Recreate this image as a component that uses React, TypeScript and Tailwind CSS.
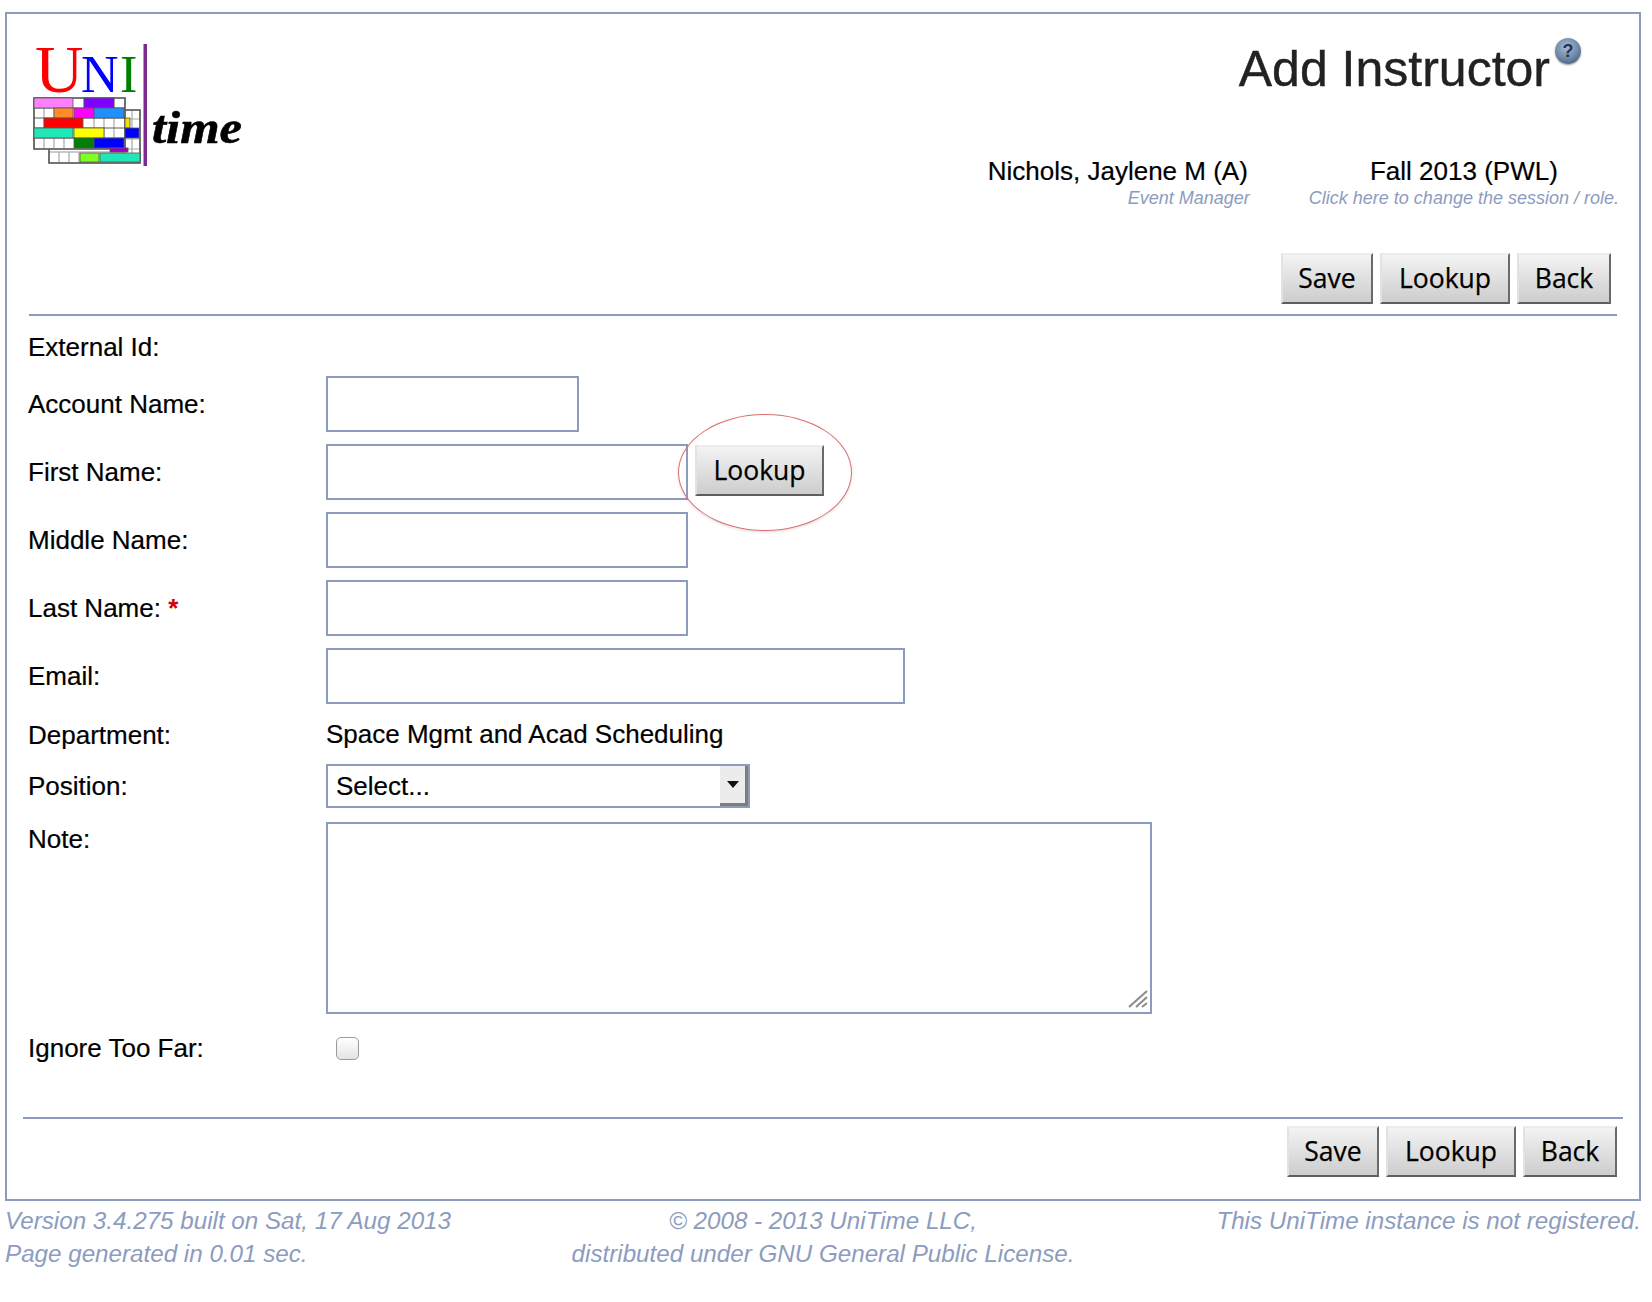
import React from "react";

const sans = "font-['Liberation_Sans',Arial,sans-serif]";

function Logo() {
  const cells: [number, number, number, number, string][] = [
    [34, 98, 39, 10, "#ff80ff"], [84, 98, 30, 10, "#8000ff"],
    [54, 108, 19, 10, "#ff8c28"], [74, 108, 20, 10, "#ff00ff"], [94, 108, 30, 10, "#1e90ff"],
    [44, 118, 39, 10, "#ff0000"], [125, 118, 5, 10, "#f0e000"],
    [34, 128, 39, 10, "#1fe8b8"], [74, 128, 30, 10, "#ffff00"], [125, 128, 14, 10, "#0000ff"],
    [74, 138, 20, 10, "#008000"], [94, 138, 30, 10, "#0000ff"], [110, 148, 18, 4, "#a000c0"],
    [80, 153, 19, 9, "#80ff20"], [100, 153, 40, 9, "#1fe8b8"],
  ];
  return (
    <svg viewBox="28 40 220 130" className="w-[220px] h-[130px] shrink-0 overflow-visible">
      <g stroke="#a8a8a8" strokeWidth="1.2" fill="#fff">
        <rect x="49" y="152" width="91" height="11" />
        <rect x="125" y="110" width="15" height="52" />
        <path d="M59 152v11M69 152v11M79 152v11M132 110v52M125 119h15M125 129h15M125 139h15M125 149h15" />
        <rect x="34" y="98" width="91" height="51" />
        <path d="M44 108v40M54 108v10M84 98v10M114 98v10M54 138v10M64 138v10M94 118v20M104 118v20M114 118v20" />
      </g>
      <g stroke="#5a5a5a" strokeWidth="1.6" fill="none">
        <path d="M34 98h91v51H34zM49 149v14h91v-53h-15" />
        <path d="M34 108h91M34 118h91M34 128h91M34 138h91" strokeWidth="1" />
      </g>
      {cells.map(([x, y, w, h, c], i) => (
        <rect key={i} x={x} y={y} width={w} height={h} fill={c} stroke="#555" strokeWidth="0.8" />
      ))}
      <rect x="143.500" y="44" width="3.500" height="122" fill="#7b2a8f" />
      <text x="35" y="92" fontFamily="Liberation Serif, serif" fontSize="67" fill="#ff0000">U</text>
      <text x="81" y="92" fontFamily="Liberation Serif, serif" fontSize="52" fill="#0000ff">N</text>
      <text x="120" y="92" fontFamily="Liberation Serif, serif" fontSize="52" fill="#008000">I</text>
      <text x="152" y="143" fontFamily="Liberation Serif, serif" fontSize="46" fontStyle="italic" fontWeight="700" fill="#000" stroke="#000" strokeWidth="0.6" textLength="90" lengthAdjust="spacingAndGlyphs">time</text>
    </svg>
  );
}

function Btn({ w, children }: { w: string; children: React.ReactNode }) {
  return (
    <button
      className={`${w} h-[51px] border-2 border-t-[#ececec] border-l-[#e2e2e2] border-r-[#6a6a6a] border-b-[#5e5e5e] bg-gradient-to-b from-[#f3f3f3] to-[#cdcdcd] text-black text-[26.500px] leading-none [-webkit-text-stroke:0.25px_#000] font-['Open_Sans',sans-serif]`}
    >
      {children}
    </button>
  );
}

const inputCls = "h-[56px] border-2 border-[#8c9cbc] bg-white";

function Row({ label, cls, children }: { label: React.ReactNode; cls?: string; children?: React.ReactNode }) {
  return (
    <div className={`flex items-center ${cls ?? ""}`}>
      <div className="w-[298px] shrink-0 pt-[1px]">{label}</div>
      {children}
    </div>
  );
}

export default function App() {
  return (
    <div className={`w-[1652px] h-[1302px] bg-white pt-[12px] pl-[5px] text-black ${sans}`}>
      <div className="w-[1636px] h-[1189px] border-2 border-[#8c9cbc] flex flex-col">
        <header className="flex pl-[21px] pr-[23px]">
          <div className="pt-[26px]">
            <Logo />
          </div>
          <div className="flex-1 flex flex-col items-end pt-[27px]">
            <div className="flex items-start mr-[35px]">
              <h1 className="text-[50px] leading-[56px] text-[#222] [-webkit-text-stroke:0.4px_#222]">Add Instructor</h1>
              <div className="ml-[5px] -mt-[3px] w-[26px] h-[26px] rounded-full bg-[radial-gradient(circle_at_45%_35%,#a9bcd4,#6c86a6_55%,#34465e)] shadow-[0_1px_2px_rgba(0,0,0,0.4)] flex items-center justify-center text-[18px] font-bold text-[#23344e]">
                ?
              </div>
            </div>
            <div className="flex mt-[60px] -mr-[3px] gap-[59px]">
              <div className="text-right">
                <div className="text-[26px] leading-[28px] pr-[2px] [-webkit-text-stroke:0.2px_#000]">Nichols, Jaylene M (A)</div>
                <div className="text-[18px] leading-[25px] pt-[1px] italic text-[#8c9cc0]">Event Manager</div>
              </div>
              <div className="text-center">
                <div className="text-[26px] leading-[28px] [-webkit-text-stroke:0.2px_#000]">Fall 2013 (PWL)</div>
                <div className="text-[18px] leading-[25px] pt-[1px] italic text-[#8c9cc0]">Click here to change the session / role.</div>
              </div>
            </div>
            <div className="flex gap-[7px] mt-[42px] mr-[5px]">
              <Btn w="w-[92px]">Save</Btn>
              <Btn w="w-[130px]">Lookup</Btn>
              <Btn w="w-[94px]">Back</Btn>
            </div>
          </div>
        </header>
        <div className="ml-[22px] mr-[22px] mt-[10px] h-[2px] bg-[#8c9cbc]" />
        <main className="pl-[21px] text-[26px] [-webkit-text-stroke:0.2px_#000] flex flex-col">
          <Row label="External Id:" cls="h-[38px] mt-[12px]" />
          <Row label="Account Name:" cls="mt-[10px]">
            <input className={`${inputCls} w-[253px]`} />
          </Row>
          <Row label="First Name:" cls="mt-[12px] relative">
            <input className={`${inputCls} w-[362px]`} />
            <div className="ml-[7px] -mt-[3px]">
              <Btn w="w-[129px]">Lookup</Btn>
            </div>
            <div className="absolute left-[650px] top-[-30px] w-[174px] h-[117px] rounded-[50%] border-[1.5px] border-[#d9706f] shadow-[0_1px_3px_rgba(0,0,0,0.15)] pointer-events-none" />
          </Row>
          <Row label="Middle Name:" cls="mt-[12px]">
            <input className={`${inputCls} w-[362px]`} />
          </Row>
          <Row
            label={
              <span>
                Last Name: <span className="text-[#d40000] font-bold [-webkit-text-stroke:0]">*</span>
              </span>
            }
            cls="mt-[12px]"
          >
            <input className={`${inputCls} w-[362px]`} />
          </Row>
          <Row label="Email:" cls="mt-[12px]">
            <input className={`${inputCls} w-[579px]`} />
          </Row>
          <Row label="Department:" cls="h-[37px] mt-[12px]">
            <span>Space Mgmt and Acad Scheduling</span>
          </Row>
          <Row label="Position:" cls="mt-[11px]">
            <div className="w-[424px] h-[44px] border-2 border-[#8c9cbc] flex items-center justify-between pl-[8px]">
              <span>Select...</span>
              <div className="w-[28px] h-full bg-[#ececec] border-r-[3px] border-b-[3px] border-[#7d7d7d] flex items-center justify-center">
                <svg width="14" height="8" viewBox="0 0 14 8">
                  <path d="M1 0h12L7 7z" fill="#111" />
                </svg>
              </div>
            </div>
          </Row>
          <div className="flex mt-[14px]">
            <div className="w-[298px] shrink-0 -mt-[2px]">Note:</div>
            <div className="relative">
              <textarea className="block w-[826px] h-[192px] border-2 border-[#8c9cbc] resize-none" />
              <svg className="absolute right-[4px] bottom-[6px]" width="20" height="18" viewBox="0 0 20 18">
                <path d="M1 17L19 1M8 17L19 7M14 17l5-4" stroke="#8a8a8a" strokeWidth="2" fill="none" />
              </svg>
            </div>
          </div>
          <Row label="Ignore Too Far:" cls="h-[42px] mt-[13px]">
            <input
              type="checkbox"
              className="ml-[10px] w-[23px] h-[23px] appearance-none rounded-[5px] border border-[#9a9a9a] bg-gradient-to-b from-white to-[#e4e4e4]"
            />
          </Row>
        </main>
        <div className="ml-[16px] mr-[16px] mt-[48px] h-[2px] bg-[#8c9cbc]" />
        <div className="flex justify-end gap-[7px] mt-[7px] mr-[22px]">
          <Btn w="w-[92px]">Save</Btn>
          <Btn w="w-[130px]">Lookup</Btn>
          <Btn w="w-[94px]">Back</Btn>
        </div>
      </div>
      <footer className="w-[1636px] grid grid-cols-3 mt-[3px] text-[24.200px] leading-[33px] italic text-[#8c9cc0]">
        <div className="whitespace-nowrap">
          Version 3.4.275 built on Sat, 17 Aug 2013
          <br />
          Page generated in 0.01 sec.
        </div>
        <div className="text-center whitespace-nowrap">
          © 2008 - 2013 UniTime LLC,
          <br />
          distributed under GNU General Public License.
        </div>
        <div className="text-right whitespace-nowrap">This UniTime instance is not registered.</div>
      </footer>
    </div>
  );
}
